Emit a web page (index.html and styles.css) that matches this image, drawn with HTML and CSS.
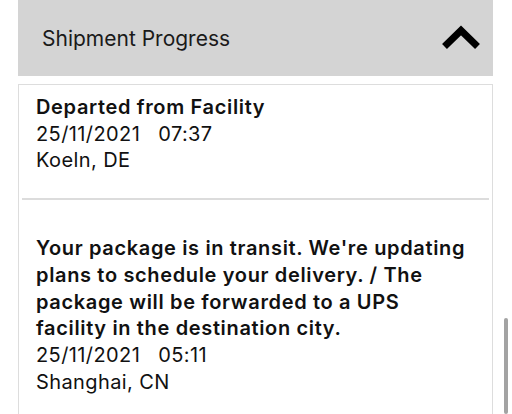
FILE: index.html
```html
<!DOCTYPE html>
<html>
<head>
<meta charset="utf-8">
<link rel="stylesheet" href="styles.css">
</head>
<body>
<div class="panel">
  <div class="header">
    <span class="title">Shipment Progress</span>
    <svg class="chevron" width="42" height="26" viewBox="0 0 42 26">
      <polyline points="4.5,21.5 21,5.5 37.5,21.5" fill="none" stroke="#000" stroke-width="7" stroke-linecap="butt" stroke-linejoin="miter"/>
    </svg>
  </div>
  <div class="card">
    <div class="item first">
      <div class="status">Departed from Facility</div>
      <div class="line">25/11/2021&nbsp;&nbsp;&nbsp;07:37</div>
      <div class="line">Koeln, DE</div>
    </div>
    <div class="sep"></div>
    <div class="item second">
      <div class="status">Your package is in transit. We're updating plans to schedule your delivery. / The package will be forwarded to a UPS facility in the destination city.</div>
      <div class="line">25/11/2021&nbsp;&nbsp;&nbsp;05:11</div>
      <div class="line">Shanghai, CN</div>
    </div>
  </div>
</div>
<div class="scrollbar"></div>
</body>
</html>
```
FILE: styles.css
```css
html, body {
  margin: 0;
  padding: 0;
  background: #fff;
  height: 414px;
  overflow: hidden;
}
body {
  font-family: Inter, "Liberation Sans", Arial, sans-serif;
  color: #111;
}
.panel {
  margin: 0 19px 0 18px;
}
.header {
  height: 76px;
  background: #d4d4d4;
  display: flex;
  align-items: center;
  justify-content: space-between;
  padding: 0 11px 0 24px;
}
.title {
  font-size: 21px;
  color: #1a1a1a;
  padding-top: 1px;
}
.chevron {
  display: block;
  margin-top: -1px;
}
.card {
  margin-top: 8px;
  border: 1px solid #dddddd;
  border-bottom: none;
  height: 329px;
  overflow: hidden;
}
.item {
  padding: 0 20px 0 17px;
  font-size: 20px;
  line-height: 26.7px;
  letter-spacing: 0.4px;
}
.item.first {
  padding-top: 9px;
  padding-bottom: 24px;
}
.item.second {
  padding-top: 35px;
}
.status {
  font-weight: 600;
  letter-spacing: 0.65px;
}
.sep {
  height: 2px;
  background: #dcdcdc;
  margin: 0 3px;
}
.scrollbar {
  position: absolute;
  left: 504px;
  top: 318px;
  width: 4px;
  height: 96px;
  border-radius: 2px;
  background: #a3a3a3;
}
```
